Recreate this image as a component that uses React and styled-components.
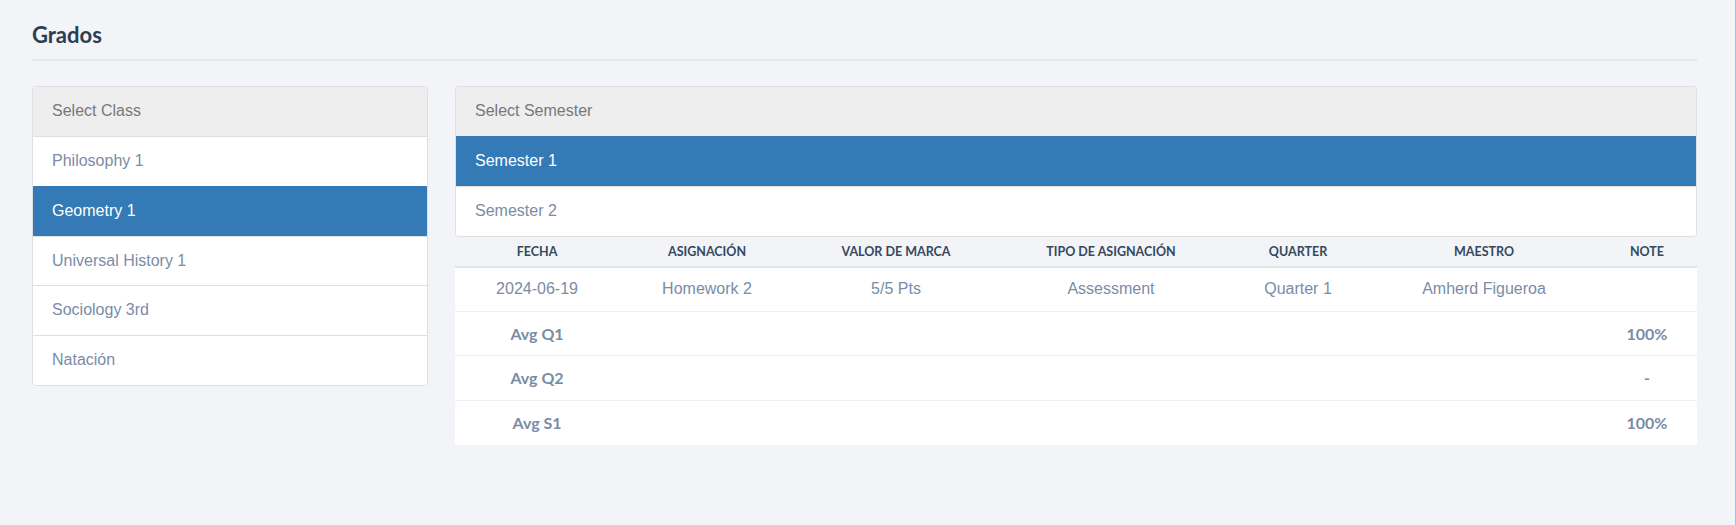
import React from 'react';
import styled, { createGlobalStyle } from 'styled-components';

const GlobalStyle = createGlobalStyle`
	html, body {
		margin: 0;
		padding: 0;
		background: #f2f4f8;
	}
	* {
		box-sizing: border-box;
	}
`;

const classes = ['Philosophy 1', 'Geometry 1', 'Universal History 1', 'Sociology 3rd', 'Natación'];
const semesters = ['Semester 1', 'Semester 2'];
const columns = [
	{ label: 'Fecha', width: 164 },
	{ label: 'Asignación', width: 176 },
	{ label: 'Valor de marca', width: 202 },
	{ label: 'Tipo de asignación', width: 228 },
	{ label: 'Quarter', width: 146 },
	{ label: 'Maestro', width: 226 },
	{ label: 'Note', width: 100 }
];
const grades = [['2024-06-19', 'Homework 2', '5/5 Pts', 'Assessment', 'Quarter 1', 'Amherd Figueroa', '']];
const averages = [
	{ label: 'Avg Q1', note: '100%' },
	{ label: 'Avg Q2', note: '-' },
	{ label: 'Avg S1', note: '100%' }
];

export default function App() {
	return (
		<Page>
			<GlobalStyle />
			<Title>Grados</Title>
			<Columns>
				<ListGroup>
					<ListHeader>Select Class</ListHeader>
					{classes.map((name) => (
						<ListItem key={name} active={name === 'Geometry 1'}>
							{name}
						</ListItem>
					))}
				</ListGroup>
				<div>
					<ListGroup>
						<ListHeader>Select Semester</ListHeader>
						{semesters.map((name) => (
							<ListItem key={name} active={name === 'Semester 1'}>
								{name}
							</ListItem>
						))}
					</ListGroup>
					<GradeTable>
						<colgroup>
							{columns.map((col) => <col key={col.label} width={col.width} />)}
						</colgroup>
						<thead>
							<tr>
								{columns.map((col) => <Th key={col.label}>{col.label}</Th>)}
							</tr>
						</thead>
						<tbody>
							{grades.map((row, i) => (
								<tr key={i}>
									{row.map((cell, j) => <Td key={j}>{cell}</Td>)}
								</tr>
							))}
							{averages.map((avg) => (
								<tr key={avg.label}>
									<Td bold>{avg.label}</Td>
									<Td />
									<Td />
									<Td />
									<Td />
									<Td />
									<Td bold>{avg.note}</Td>
								</tr>
							))}
						</tbody>
					</GradeTable>
				</div>
			</Columns>
		</Page>
	);
}

const Page = styled.div`
	min-height: 100vh;
	padding: 23px 38px 40px 32px;
	border-right: 1px solid #a9bbe6;
`;

const Title = styled.h1`
	margin: 0 0 25px;
	padding-bottom: 12px;
	border-bottom: 2px solid #e4e7eb;
	font-family: Lato, 'Liberation Sans', sans-serif;
	font-weight: 700;
	font-size: 22px;
	line-height: 1.1;
	color: #2c3e50;
`;

const Columns = styled.div`
	display: grid;
	grid-template-columns: 396px 1fr;
	gap: 27px;
	align-items: start;
`;

const ListGroup = styled.div`
	border: 1px solid #dcdfe3;
	border-radius: 4px;
	overflow: hidden;
	background: #fff;
	font-family: 'Liberation Sans', Arial, sans-serif;
	font-size: 16px;
`;

const ListHeader = styled.div`
	padding: 12px 19px;
	line-height: 24.8px;
	background: #eeeeee;
	color: #787878;
`;

const ListItem = styled.div`
	padding: 12px 19px;
	line-height: 24.8px;
	border-top: 1px solid #dedede;
	background: ${(p) => (p.active ? '#337ab7' : '#fff')};
	color: ${(p) => (p.active ? '#fff' : '#7b8ca6')};
	border-top-color: ${(p) => (p.active ? '#337ab7' : '#dedede')};
	cursor: pointer;
`;

const GradeTable = styled.table`
	width: 100%;
	border-collapse: collapse;
	table-layout: fixed;
`;

const Th = styled.th`
	padding: 8px 6px 7px;
	border-bottom: 2px solid #e2e5e9;
	font-family: Lato, 'Liberation Sans', sans-serif;
	font-weight: 700;
	font-size: 12.5px;
	line-height: 14px;
	text-transform: uppercase;
	text-align: center;
	color: #34495e;
`;

const Td = styled.td`
	height: 44.5px;
	padding: 0 6px;
	background: #fff;
	border-top: 1px solid #eef0f2;
	text-align: center;
	vertical-align: middle;
	color: #7b8ca6;
	font-family: ${(p) => (p.bold ? "Lato, 'Liberation Sans', sans-serif" : "'Liberation Sans', Arial, sans-serif")};
	font-weight: ${(p) => (p.bold ? 700 : 400)};
	font-size: 16px;
`;
